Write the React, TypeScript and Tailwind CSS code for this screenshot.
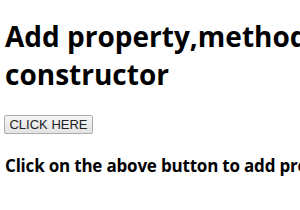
export default function App() {
  return (
    <div className="min-h-screen bg-white text-black px-[5px] font-['Open_Sans',sans-serif]">
      <h1 className="pt-[17px] text-[28px] leading-[38px] font-bold whitespace-nowrap">
        Add property,method to
        <br />
        constructor
      </h1>
      <div className="mt-[18px]">
        <button className="h-[19px] w-[89px] -ml-[1px] border border-[#adadad] rounded-[2px] bg-gradient-to-b from-[#f6f6f6] to-[#e3e3e3] text-[13px] leading-[17px] text-[#222] font-['Liberation_Sans',Arial,sans-serif]">
          CLICK HERE
        </button>
      </div>
      <p className="mt-[20px] text-[17px] leading-[22px] font-bold tracking-[-0.2px] whitespace-nowrap">
        Click on the above button to add property
      </p>
    </div>
  );
}
